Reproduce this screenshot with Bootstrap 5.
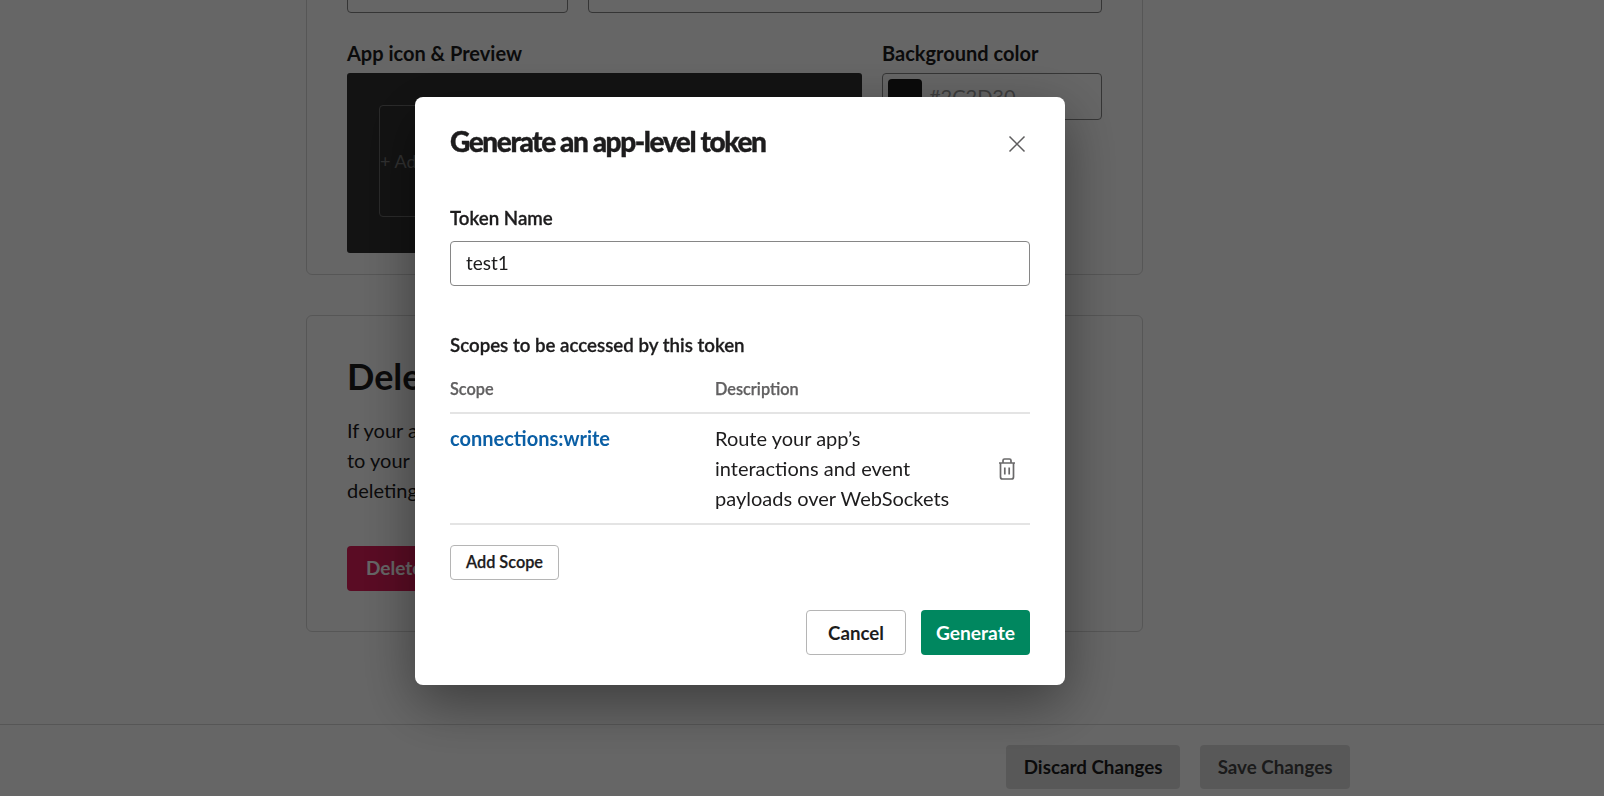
<!DOCTYPE html>
<html>
  <head>
    <title>Generate an app-level token</title>
    <link href="https://cdn.jsdelivr.net/npm/bootstrap@5.3.2/dist/css/bootstrap.min.css" rel="stylesheet">
    <style>
      body { font-family: Lato, "Liberation Sans", sans-serif; color: #1d1c1d; font-size: 20px; overflow: hidden; height: 796px; }

      /* page behind the dialog */
      .page-wrap { width: 837px; margin: -100px 0 0 306px; }
      .panel { border: 1px solid #d8d8d8; border-radius: 6px; padding: 40px; background: #fff; }
      .panel-top { height: 375px; padding-top: 0; margin-bottom: 40px; }
      .panel-del { height: 317px; padding-top: 38px; }
      .fake-input { height: 46px; border: 1px solid #868686; border-radius: 4px; }
      .field-row { gap: 20px; margin-top: 66px; }
      .field-a { width: 221px; }
      .preview-row { gap: 20px; margin-top: 28px; }
      .preview-col { width: 515px; }
      .color-col { width: 220px; }
      .field-title { font-weight: 700; line-height: 24px; margin-bottom: 8px; font-size: 20px; }
      .preview-box { height: 180px; background: #303030; border-radius: 3px; padding: 32px; }
      .add-box { width: 140px; height: 112px; border: 1px solid #6b6b6b; border-radius: 4px; color: #7a7a7a; font-size: 18px; white-space: nowrap; line-height: 110px; }
      .color-box { height: 47px; padding: 5px; gap: 7px; color: #999; font-size: 20px; line-height: 35px; }
      .swatch { width: 34px; height: 34px; background: #1c1c1c; border-radius: 4px; }
      .del-title { font-size: 36px; font-weight: 700; line-height: 44px; margin-bottom: 17px; }
      .del-text { line-height: 30px; margin-bottom: 41px; white-space: nowrap; }
      .del-btn { background: #e01e5a; color: #fff; font-weight: 700; border: 0; height: 45px; width: 140px; padding: 0 19px; text-align: left; border-radius: 4px; font-size: 19px; white-space: nowrap; }
      .bottom-bar { height: 72px; background: #fff; border-top: 1px solid #d8d8d8; gap: 20px; padding: 20px 254px 0 0; }
      .bar-btn { height: 44px; background: #ddd; border: 0; border-radius: 4px; color: #1d1c1d; font-weight: 700; font-size: 18.8px; padding: 1px 17.5px 0; }
      .bar-btn-save { color: #454545; }

      /* dialog */
      .modal-backdrop.show { opacity: .6; }
      .token-dialog { max-width: 650px; width: 650px; margin: 97px 0 0 415px; }
      .token-dialog .modal-content { height: 588px; border: 0; border-radius: 8px; padding: 0 35px; box-shadow: 0 18px 56px rgba(0,0,0,.42); }
      .token-head { padding: 26px 0 0; border: 0; }
      .token-head h1 { font-size: 28px; font-weight: 900; line-height: 36px; letter-spacing: -1.4px; margin: 0; color: #1d1c1d; -webkit-text-stroke: .4px #1d1c1d; }
      .close-x { background: none; border: 0; padding: 0; width: 18px; height: 18px; line-height: 0; margin-right: 4px; margin-top: 5px; }
      .token-body { padding: 0; flex: none; }
      .token-label { font-weight: 600; line-height: 24px; margin: 47px 0 11px; font-size: 18.7px; -webkit-text-stroke: .3px #1d1c1d; }
      .token-input.form-control { height: 45px; border: 1px solid #868686; border-radius: 4px; padding: 0 15px 2px; font-size: 19px; color: #1d1c1d; }
      .scope-title { font-weight: 600; font-size: 18.7px; line-height: 24px; margin: 47px 0 0; -webkit-text-stroke: .3px #1d1c1d; }
      .scope-table { margin: 0; color: #1d1c1d; table-layout: fixed; }
      .scope-table th { font-size: 16.3px; font-weight: 600; color: #616061; padding: 20px 0 11px; line-height: 24px; border-bottom: 2px solid #e4e4e4; -webkit-text-stroke: .25px #616061; }
      .scope-table td { font-size: 20px; line-height: 30px; padding: 9px 0 10px; border-bottom: 2px solid #e4e4e4; vertical-align: top; }
      .col-scope { width: 265px; }
      .col-desc { width: 262px; }
      .scope-name a { color: #0b5fa5; font-weight: 700; text-decoration: none; }
      .scope-table td.scope-desc { padding-right: 20px; }
      .scope-table td.scope-del { vertical-align: middle; text-align: right; padding: 11px 14px 10px 0; line-height: 0; }
      .add-scope { height: 35px; width: 109px; padding: 0; margin-top: 20px; background: #fff; border: 1px solid #b5b5b5; border-radius: 4px; font-size: 16.3px; font-weight: 600; color: #1d1c1d; -webkit-text-stroke: .25px #1d1c1d; }
      .token-foot { padding: 0; border: 0; gap: 15px; margin-top: 30px; justify-content: flex-end; }
      .token-foot .btn { height: 45px; margin: 0; padding: 1px 0 0; font-size: 18.7px; font-weight: 700; border-radius: 4px; }
      .token-foot .btn-generate { font-size: 19.2px; }
      .btn-cancel { width: 100px; background: #fff; border: 1px solid #b5b5b5; color: #1d1c1d; }
      .btn-generate { width: 109px; background: #00875f; border: 0; color: #fff; }
    </style>
  </head>
  <body>
    <div class="page-wrap">
      <section class="panel panel-top">
        <div class="d-flex field-row">
          <div class="fake-input field-a"></div>
          <div class="fake-input flex-grow-1"></div>
        </div>
        <div class="d-flex preview-row">
          <div class="preview-col">
            <div class="field-title">App icon &amp; Preview</div>
            <div class="preview-box"><div class="add-box">+ Add App Icon</div></div>
          </div>
          <div class="color-col">
            <div class="field-title">Background color</div>
            <div class="fake-input color-box d-flex"><span class="swatch"></span><span>#2C2D30</span></div>
          </div>
        </div>
      </section>
      <section class="panel panel-del">
        <div class="del-title">Delete App</div>
        <p class="del-text">If your app is no longer needed, you can delete it below, or you can migrate it<br>to your other workspace before<br>deleting it from this one.</p>
        <button class="del-btn" type="button">Delete App</button>
      </section>
    </div>
    <div class="fixed-bottom bottom-bar d-flex justify-content-end">
      <button class="bar-btn" type="button">Discard Changes</button>
      <button class="bar-btn bar-btn-save" type="button">Save Changes</button>
    </div>

    <div class="modal-backdrop show"></div>
    <div class="modal d-block" role="dialog">
      <div class="modal-dialog token-dialog">
        <div class="modal-content">
          <div class="modal-header token-head">
            <h1>Generate an app-level token</h1>
            <button class="close-x ms-auto" type="button" aria-label="Close">
              <svg width="18" height="18" viewBox="0 0 18 18" fill="none" stroke="#5e5d5e" stroke-width="1.5"><path d="M1.500 1.500 16.500 16.500M16.500 1.500 1.500 16.500"/></svg>
            </button>
          </div>
          <div class="modal-body token-body">
            <label class="d-block token-label" for="tokenName">Token Name</label>
            <input id="tokenName" class="form-control token-input" type="text" value="test1">
            <p class="scope-title">Scopes to be accessed by this token</p>
            <table class="table scope-table">
              <thead>
                <tr><th class="col-scope">Scope</th><th class="col-desc">Description</th><th></th></tr>
              </thead>
              <tbody>
                <tr>
                  <td class="scope-name"><a href="#">connections:write</a></td>
                  <td class="scope-desc">Route your app’s interactions and event payloads over WebSockets</td>
                  <td class="scope-del">
                    <svg width="18" height="22" viewBox="0 0 18 22" fill="none" stroke="#6a696a" stroke-width="1.7"><path d="M1 5H17M5 5V2.500A1.500 1.500 0 0 1 6.500 1H11.500A1.500 1.500 0 0 1 13 2.500V5M2.500 5V19A2 2 0 0 0 4.500 21H13.500A2 2 0 0 0 15.500 19V5M6.800 9.500V16.500M11.200 9.500V16.500"/></svg>
                  </td>
                </tr>
              </tbody>
            </table>
            <button class="add-scope" type="button">Add Scope</button>
          </div>
          <div class="modal-footer token-foot">
            <button class="btn btn-cancel" type="button">Cancel</button>
            <button class="btn btn-generate" type="button">Generate</button>
          </div>
        </div>
      </div>
    </div>
    <script src="https://cdn.jsdelivr.net/npm/bootstrap@5.3.2/dist/js/bootstrap.bundle.min.js"></script>
  </body>
</html>
